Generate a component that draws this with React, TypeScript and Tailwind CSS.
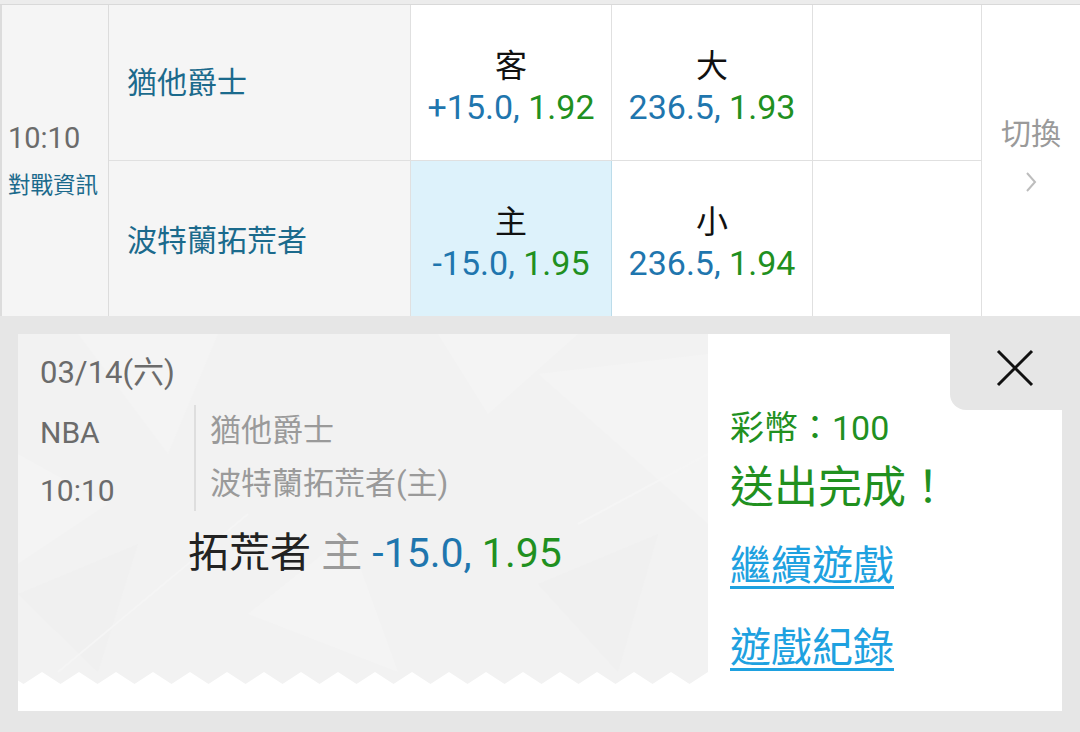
import React from 'react';

const font = "font-['Roboto','Noto_Sans_CJK_TC',sans-serif]";

function Odds({ label, line, price, selected }: { label: string; line: string; price: string; selected?: boolean }) {
    return (
        <div
            className={
                'w-[201px] flex flex-col items-center justify-center pt-[10px] border-r ' +
                (selected ? 'bg-[#ddf2fb] border-[#bcdcea]' : 'bg-white border-[#e0e0e0]')
            }
        >
            <div className="h-[38px] leading-[38px] text-[32px] text-[#111]">{label}</div>
            <div className="h-[44px] leading-[44px] text-[34px]">
                <span className="text-[#1f76ae]">{line}, </span>
                <span className="text-[#21901f]">{price}</span>
            </div>
        </div>
    );
}

function TicketBg() {
    // 左側票根的底紋 + 鋸齒邊
    let zig = 'M0 0 L690 0 L690 338 ';
    for (let x = 690; x > 0; x -= 37) {
        zig += `L${x - 18.5} 350 L${x - 37} 338 `;
    }
    zig += 'Z';
    return (
        <svg className="absolute inset-0" width="690" height="377" viewBox="0 0 690 377">
            <path d={zig} fill="#f2f2f2" />
            <polygon points="60,0 200,0 150,120" fill="#f4f4f4" />
            <polygon points="420,0 560,0 470,80" fill="#f4f4f4" />
            <polygon points="520,40 690,20 690,190" fill="#f4f4f4" />
            <polygon points="0,260 120,210 80,338" fill="#f0f0f0" />
            <polygon points="230,280 330,200 380,338" fill="#f4f4f4" />
            <polygon points="520,250 640,200 600,338" fill="#f0f0f0" />
            <polygon points="0,120 0,230 90,170" fill="#f4f4f4" />
            <line x1="40" y1="338" x2="230" y2="180" stroke="#f5f5f5" strokeWidth="2" />
            <line x1="560" y1="190" x2="690" y2="120" stroke="#f5f5f5" strokeWidth="2" />
        </svg>
    );
}

export default function App() {
    return (
        <div className={'w-[1080px] h-[732px] bg-[#e6e6e6] overflow-hidden ' + font}>
            <div className="h-[5px] bg-[#ececec] border-b border-[#d9d9d9]" />

            <div className="flex h-[311px] bg-white">
                <div className="w-[109px] bg-[#f5f5f5] border-l-2 border-r border-[#dcdcdc] flex flex-col justify-center pl-[6px]">
                    <div className="h-[34px] leading-[34px] text-[29px] text-[#6b6b6b]">10:10</div>
                    <div className="mt-[15px] h-[30px] leading-[30px] text-[22.5px] text-[#1b6a8c]">對戰資訊</div>
                </div>

                <div className="flex flex-col">
                    <div className="flex h-[156px] border-b border-[#e0e0e0]">
                        <div className="w-[302px] bg-[#f5f5f5] border-r border-[#e0e0e0] flex items-center pl-[18px] text-[30px] text-[#1b6a8c]">
                            猶他爵士
                        </div>
                        <Odds label="客" line="+15.0" price="1.92" />
                        <Odds label="大" line="236.5" price="1.93" />
                        <div className="w-[169px] border-r border-[#e0e0e0]" />
                    </div>
                    <div className="flex h-[155px]">
                        <div className="w-[302px] bg-[#f5f5f5] border-r border-[#e0e0e0] flex items-center pl-[18px] pt-[4px] text-[30px] text-[#1b6a8c]">
                            波特蘭拓荒者
                        </div>
                        <Odds label="主" line="-15.0" price="1.95" selected />
                        <Odds label="小" line="236.5" price="1.94" />
                        <div className="w-[169px] border-r border-[#e0e0e0]" />
                    </div>
                </div>

                <div className="w-[98px] bg-white flex flex-col items-center justify-center pb-[12px]">
                    <div className="h-[34px] leading-[34px] text-[30px] text-[#9a9a9a]">切換</div>
                    <svg className="mt-[20px]" width="14" height="22" viewBox="0 0 14 22">
                        <path d="M3 2 L11 11 L3 20" fill="none" stroke="#bdbdbd" strokeWidth="2" />
                    </svg>
                </div>
            </div>

            <div className="pt-[18px] px-[18px]">
                <div className="relative flex h-[377px] bg-white">
                    <div className="relative w-[690px] h-full">
                        <TicketBg />
                        <div className="relative pl-[22px] pt-[21px]">
                            <div className="h-[36px] leading-[36px] text-[31px] text-[#6b6b6b]">03/14(六)</div>
                            <div className="flex mt-[14px]">
                                <div className="w-[154px] text-[30px] text-[#6b6b6b]">
                                    <div className="h-[56px] leading-[56px]">NBA</div>
                                    <div className="h-[60px] leading-[60px]">10:10</div>
                                </div>
                                <div className="self-start border-l-2 border-[#dedede] pl-[14px] text-[31px] text-[#9a9a9a]">
                                    <div className="h-[52px] leading-[52px]">猶他爵士</div>
                                    <div className="h-[54px] leading-[54px]">波特蘭拓荒者(主)</div>
                                </div>
                            </div>
                            <div className="mt-[8px] ml-[148px] h-[48px] leading-[48px] text-[41px]">
                                <span className="text-[#222]">拓荒者 </span>
                                <span className="text-[#9a9a9a]">主 </span>
                                <span className="text-[#1f76ae]">-15.0, </span>
                                <span className="text-[#21901f]">1.95</span>
                            </div>
                        </div>
                    </div>

                    <div className="flex-1 pl-[22px] pt-[74px]">
                        <div className="h-[40px] leading-[40px] text-[34px] text-[#21901f]">彩幣：100</div>
                        <div className="mt-[16px] h-[48px] leading-[48px] text-[44px] text-[#21901f]">送出完成！</div>
                        <div className="mt-[30px] h-[48px] leading-[48px] text-[41px] text-[#1ea1e0] underline decoration-[3px] underline-offset-[6px]">
                            繼續遊戲
                        </div>
                        <div className="mt-[34px] h-[48px] leading-[48px] text-[41px] text-[#1ea1e0] underline decoration-[3px] underline-offset-[6px]">
                            遊戲紀錄
                        </div>
                    </div>

                    <div className="absolute top-0 right-0 w-[112px] h-[76px] bg-[#e6e6e6] rounded-bl-[16px]">
                        <svg className="ml-[46px] mt-[15px]" width="38" height="38" viewBox="0 0 38 38">
                            <path d="M2 2 L36 36 M36 2 L2 36" stroke="#111" strokeWidth="3" fill="none" />
                        </svg>
                    </div>
                </div>
            </div>
        </div>
    );
}
